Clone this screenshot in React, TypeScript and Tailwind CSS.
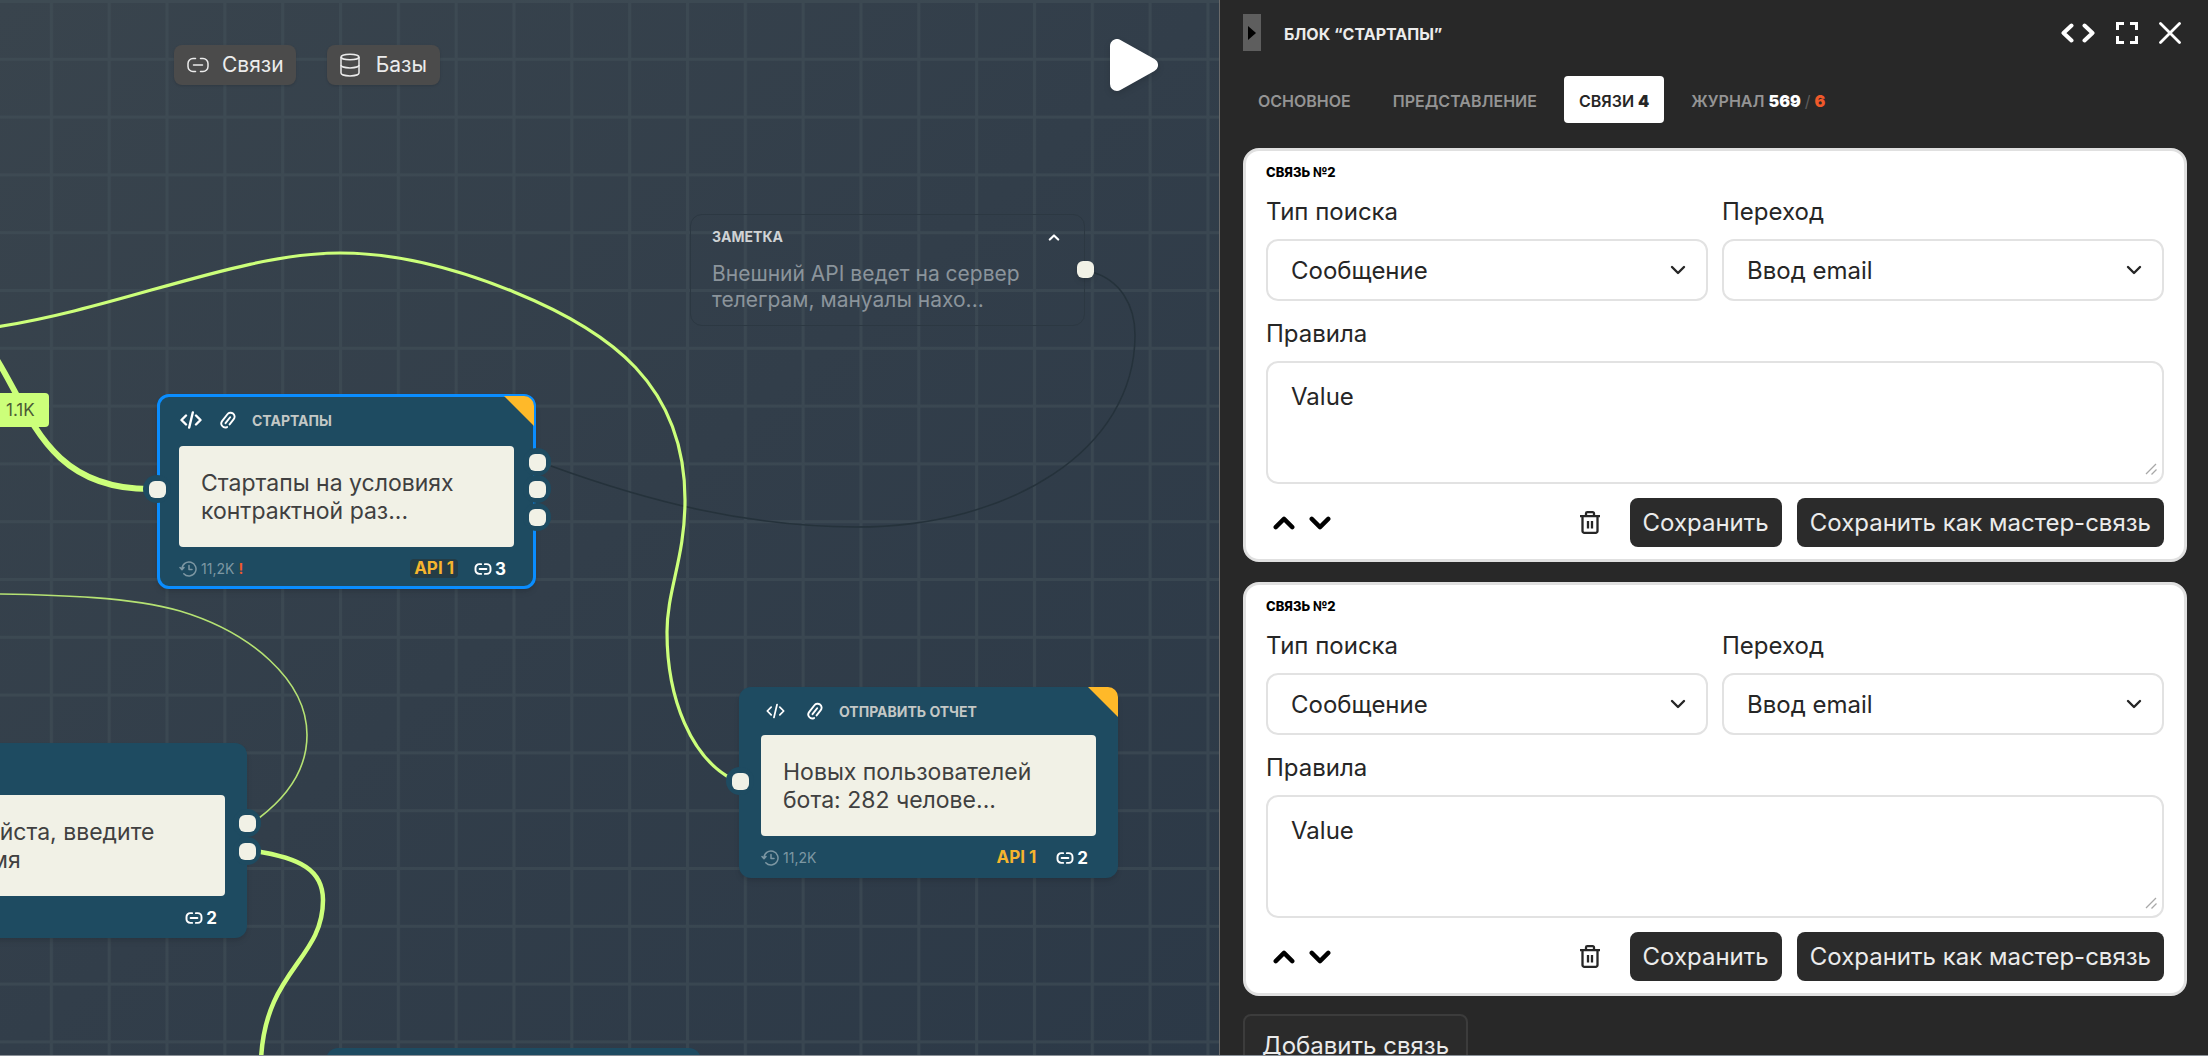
import { useState, ReactNode } from 'react';

type IconProps = { className?: string };

function LinkIcon({ className, strokeWidth = 2 }: IconProps & { strokeWidth?: number }) {
  return (
    <svg viewBox="0 0 24 16" fill="none" stroke="currentColor" strokeWidth={strokeWidth} strokeLinecap="round" className={className} aria-hidden="true">
      <path d="M9.500 1.500H7a5 5 0 0 0-5 5v3a5 5 0 0 0 5 5h2.500M14.500 1.500H17a5 5 0 0 1 5 5v3a5 5 0 0 1-5 5h-2.500M7.500 8h9" />
    </svg>
  );
}

function DatabaseIcon({ className }: IconProps) {
  return (
    <svg viewBox="0 0 20 24" fill="none" stroke="currentColor" strokeWidth="1.500" className={className} aria-hidden="true">
      <ellipse cx="10" cy="4" rx="9" ry="2.800" />
      <path d="M1 4v16c0 1.600 4 2.900 9 2.900s9-1.300 9-2.900V4" />
      <path d="M1 12c0 1.600 4 2.900 9 2.900s9-1.300 9-2.900" />
    </svg>
  );
}

function CodeIcon({ className, strokeWidth = 2.4 }: IconProps & { strokeWidth?: number }) {
  return (
    <svg viewBox="0 0 22 18" fill="none" stroke="currentColor" strokeWidth={strokeWidth} strokeLinecap="round" strokeLinejoin="round" className={className} aria-hidden="true">
      <path d="M6 4.500 1.500 9 6 13.500M16 4.500 20.500 9 16 13.500M12.800 1.500 9.200 16.500" />
    </svg>
  );
}

function ClipIcon({ className }: IconProps) {
  return (
    <svg viewBox="0 0 16 18" fill="none" stroke="currentColor" strokeWidth="1.900" strokeLinecap="round" className={className} aria-hidden="true">
      <path d="M12 11.500V4.800a4 4 0 0 0-8 0v8.700a4 4 0 0 0 7.600 1.600M8 5.500v7.500" transform="rotate(38 8 9)" />
    </svg>
  );
}

function HistoryIcon({ className }: IconProps) {
  return (
    <svg viewBox="0 0 18 16" fill="none" stroke="currentColor" strokeWidth="1.500" strokeLinecap="round" strokeLinejoin="round" className={className} aria-hidden="true">
      <path d="M3 8a7 7 0 1 1 1.800 4.700M1 6.500 3 8.700l2-2.200M10 4.500V8.500h3" />
    </svg>
  );
}

function Chevron({ className, up = false, strokeWidth = 2 }: IconProps & { up?: boolean; strokeWidth?: number }) {
  return (
    <svg viewBox="0 0 16 10" fill="none" stroke="currentColor" strokeWidth={strokeWidth} strokeLinecap="round" strokeLinejoin="round" className={className} aria-hidden="true">
      <path d={up ? 'M2 8l6-6 6 6' : 'M2 2l6 6 6-6'} />
    </svg>
  );
}

function TrashIcon({ className }: IconProps) {
  return (
    <svg viewBox="0 0 20 23" fill="none" stroke="currentColor" strokeWidth="2.300" strokeLinejoin="round" className={className} aria-hidden="true">
      <path d="M0 5.200h20M6 5V2.500a1.300 1.300 0 0 1 1.300-1.300h5.400A1.300 1.300 0 0 1 14 2.500V5M2.500 5.500V20a1.800 1.800 0 0 0 1.800 1.800h11.400a1.800 1.800 0 0 0 1.800-1.800V5.500M8 10v7.500M12 10v7.500" />
    </svg>
  );
}

function Port({ className }: IconProps) {
  return (
    <span className={`absolute flex size-7 items-center justify-center rounded-full bg-[#1e4b61] ${className}`}>
      <span className="size-[17px] rounded-md bg-[#f1f1e6]" />
    </span>
  );
}

interface FlowNodeProps {
  title?: string;
  lines: string[];
  links: number;
  views?: string;
  hasError?: boolean;
  api?: string;
  selected?: boolean;
  className: string;
  children?: ReactNode;
}

function FlowNode({ title, lines, links, views, hasError, api, selected, className, children }: FlowNodeProps) {
  return (
    <article className={`absolute w-[379px] rounded-xl bg-[#1e4b61] shadow-md ${className}`}>
      {selected && <span className="absolute inset-0 z-10 rounded-xl border-3 border-[#0a8dff]" />}
      {title && (
        <svg viewBox="0 0 30 30" className={`absolute z-10 size-[30px] ${selected ? 'top-[2px] right-[2px]' : 'top-0 right-0'}`} aria-hidden="true">
          <path d="M0 0H20a10 10 0 0 1 10 10V30Z" fill="#ffb929" />
        </svg>
      )}
      <header
        className={`flex items-center ${selected || !title ? 'h-[52px]' : 'h-12'} ${selected ? 'gap-[18px] pl-[23px]' : 'gap-[22px] pl-[27px]'}`}
      >
        {title && (
          <>
            <CodeIcon className={selected ? 'h-[18px] w-[22px] text-white' : 'h-4 w-[19px] text-white'} strokeWidth={selected ? 2.4 : 2} />
            <div className="flex items-center gap-4">
              <ClipIcon className="h-[18px] w-4 text-white" />
              <h2 className="text-[14px] font-bold text-[#c4c8c6]">{title}</h2>
            </div>
          </>
        )}
      </header>
      <div className="mx-[22px] flex h-[101px] flex-col justify-center rounded-sm bg-[#f1f1e6] pl-[22px] text-[23px] leading-7 text-[#404040]">
        {lines.map(line => (
          <p key={line} className="whitespace-nowrap">{line}</p>
        ))}
      </div>
      <footer className="flex h-[42px] items-center px-[22px] pt-px">
        {views && (
          <span className="flex items-center gap-1 text-[14px] text-[#7d97a3]">
            <HistoryIcon className="h-4 w-[18px]" />
            {views}
            {hasError && <b className="text-[#f0592a]">!</b>}
          </span>
        )}
        <span className="ml-auto flex items-center gap-4 pr-2">
          {api && (
            <span className={`rounded px-1 text-[17px] leading-[19px] font-bold text-[#f6b52e] ${selected ? 'bg-[#243c46]' : ''}`}>{api}</span>
          )}
          <span className="flex items-center gap-[3px] text-[17px] leading-5 font-bold text-white">
            <LinkIcon className="h-3 w-[18px]" strokeWidth={2.6} />
            {links}
          </span>
        </span>
      </footer>
      {children}
    </article>
  );
}

function Connections() {
  return (
    <svg className="absolute inset-0 h-full w-full" fill="none" aria-hidden="true">
      <defs>
        <pattern id="grid" x="-8" y="0" width="57.83" height="57.8" patternUnits="userSpaceOnUse">
          <path d="M0 0H57.830V3H0ZM0 3H3V57.800H0Z" fill="#435159" fillOpacity="0.5" />
        </pattern>
      </defs>
      <rect width="100%" height="100%" fill="url(#grid)" />
      <path d="M551 466C650 502 750 527 856 527C1010 527 1135 450 1135 335C1135 305 1120 280 1092 272" stroke="#25323b" strokeWidth="1.500" />
      <g stroke="#ccff7a">
        <path d="M-4 327C120 308 240 253 340 253C400 253 460 270 514 292C610 331 685 385 685 500C685 558 667 590 667 632C667 700 692 758 732 779" strokeWidth="3.200" />
        <path d="M-6 355C30 410 45 489 150 489" strokeWidth="6" />
        <path d="M0 594C60 595 130 597 180 611C250 632 307 680 307 735C307 770 288 796 259 818" strokeWidth="1.600" strokeOpacity="0.85" />
        <path d="M255 851C300 858 323 870 323 900C323 960 265 970 261 1060" strokeWidth="4.500" />
      </g>
    </svg>
  );
}

function Canvas() {
  return (
    <section className="relative overflow-hidden bg-linear-to-br from-[#39444d] via-[#323e4a] to-[#2c3947]">
      <Connections />

      <div className="relative flex items-center pt-[38px] pr-[60px] pl-[174px]">
        <button className="flex h-10 items-center gap-3 rounded-lg bg-[#4b4b4b] px-3 text-[21px] text-[#ececec] shadow-sm">
          <LinkIcon className="h-4 w-6" strokeWidth={1.5} />
          Связи
        </button>
        <button className="ml-[31px] flex h-10 items-center gap-4 rounded-lg bg-[#4b4b4b] px-[13px] text-[21px] text-[#ececec] shadow-sm">
          <DatabaseIcon className="h-6 w-5" />
          Базы
        </button>
        <button aria-label="Запустить" className="ml-auto">
          <svg viewBox="0 0 50 54" className="h-[54px] w-[50px] drop-shadow-md" aria-hidden="true">
            <path d="M8 8V46L42 27Z" fill="#fff" stroke="#fff" strokeWidth="14" strokeLinejoin="round" />
          </svg>
        </button>
      </div>

      <article className="absolute top-[214px] left-[690px] h-28 w-[395px] rounded-xl border border-[#2c3842] pt-3 pl-[21px]">
        <header className="flex items-center justify-between pr-6">
          <h2 className="text-[14px] leading-5 font-bold text-[#d0d3d5]">ЗАМЕТКА</h2>
          <button aria-label="Свернуть заметку" className="text-white">
            <Chevron up className="h-[7px] w-3" strokeWidth={3} />
          </button>
        </header>
        <p className="mt-[14px] text-[21px] leading-[26px] whitespace-nowrap text-[#8b949b]">
          Внешний API ведет на сервер
          <br />
          телеграм, мануалы нахо...
        </p>
        <span className="absolute top-[46px] -right-[10px] size-[17px] rounded-md bg-[#f1f1e6] shadow-md" />
      </article>

      <span className="absolute top-[393px] -left-3 rounded bg-[#ccff7a] py-1 pr-[14px] pl-[18px] text-[17px] leading-[26px] text-[#4c5a35]">1.1K</span>

      <FlowNode
        title="СТАРТАПЫ"
        lines={['Стартапы на условиях', 'контрактной раз...']}
        links={3}
        views="11,2K"
        hasError
        api="API 1"
        selected
        className="top-[394px] left-[157px]"
      >
        <Port className="top-[81px] -left-[14px] z-20" />
        <Port className="top-[54px] -right-[15px] z-20" />
        <Port className="top-[81px] -right-[15px] z-20" />
        <Port className="top-[109px] -right-[15px] z-20" />
      </FlowNode>

      <FlowNode lines={['Пожалуйста, введите', 'ваше имя']} links={2} className="top-[743px] -left-[132px]">
        <Port className="top-[66px] -right-[14px]" />
        <Port className="top-[94px] -right-[14px]" />
      </FlowNode>

      <FlowNode
        title="ОТПРАВИТЬ ОТЧЕТ"
        lines={['Новых пользователей', 'бота: 282 челове...']}
        links={2}
        views="11,2K"
        api="API 1"
        className="top-[687px] left-[739px]"
      >
        <Port className="top-[80px] -left-[13px]" />
      </FlowNode>

      <div className="absolute top-[1048px] left-[326px] h-48 w-[375px] rounded-xl bg-[#1e4b61]" />
    </section>
  );
}

function SelectField({ id, label, options }: { id: string; label: string; options: string[] }) {
  return (
    <div className="flex-1">
      <label htmlFor={id} className="block leading-9">{label}</label>
      <div className="relative mt-[9px]">
        <select id={id} className="h-[62px] w-full appearance-none rounded-xl border-2 border-[#e2e2e2] bg-white px-[23px] pt-px">
          {options.map(option => (
            <option key={option}>{option}</option>
          ))}
        </select>
        <Chevron className="pointer-events-none absolute top-[26px] right-[22px] h-[10px] w-4" strokeWidth={2.4} />
      </div>
    </div>
  );
}

function LinkCard({ id }: { id: string }) {
  return (
    <section className="rounded-2xl border-3 border-[#e0e0e0] bg-white px-5 pt-[11px] pb-3 text-2xl text-[#262626]">
      <h3 className="text-[13px] leading-5 font-extrabold text-black">СВЯЗЬ №2</h3>
      <div className="mt-3 flex gap-[14px]">
        <SelectField id={`${id}-type`} label="Тип поиска" options={['Сообщение', 'Команда']} />
        <SelectField id={`${id}-target`} label="Переход" options={['Ввод email', 'Отправить отчет']} />
      </div>
      <label htmlFor={`${id}-rules`} className="mt-[15px] block leading-9">Правила</label>
      <div className="relative mt-[9px]">
        <textarea
          id={`${id}-rules`}
          defaultValue="Value"
          className="block h-[123px] w-full resize-none rounded-xl border-2 border-[#e2e2e2] bg-white px-[23px] py-[18px] leading-8"
        />
        <svg viewBox="0 0 12 12" className="pointer-events-none absolute right-[7px] bottom-[9px] size-3" stroke="#a8a8a8" strokeWidth="1.300" aria-hidden="true">
          <path d="M1 11 11 1M6.500 11.500 11.500 6.500" />
        </svg>
      </div>
      <div className="mt-[14px] flex items-center">
        <button aria-label="Выше" className="ml-[7px] text-black">
          <Chevron up className="h-[14px] w-[22px]" strokeWidth={3.2} />
        </button>
        <button aria-label="Ниже" className="ml-[14px] text-black">
          <Chevron className="h-[14px] w-[22px]" strokeWidth={3.2} />
        </button>
        <button aria-label="Удалить" className="mr-[30px] ml-auto">
          <TrashIcon className="h-[23px] w-5" />
        </button>
        <button className="h-[49px] rounded-lg bg-[#2b2b2b] px-[13px] text-[#ebebeb]">Сохранить</button>
        <button className="ml-[15px] h-[49px] rounded-lg bg-[#2b2b2b] px-[13px] text-[#ebebeb]">Сохранить как мастер-связь</button>
      </div>
    </section>
  );
}

const tabs: { id: string; content: ReactNode }[] = [
  { id: 'main', content: 'ОСНОВНОЕ' },
  { id: 'view', content: 'ПРЕДСТАВЛЕНИЕ' },
  { id: 'links', content: <>СВЯЗИ <b>4</b></> },
  {
    id: 'log',
    content: (
      <>
        ЖУРНАЛ <b className="text-white">569</b> <span className="font-normal text-[#5c5c5c]">/</span> <b className="text-[#f0592a]">6</b>
      </>
    ),
  },
];

function SidePanel() {
  const [activeTab, setActiveTab] = useState('links');

  return (
    <aside className="overflow-hidden border-l border-[#6b6b6b] bg-[#282828] pt-[14px] pr-[21px] pl-[23px]">
      <header className="flex h-[37px] items-center">
        <button aria-label="Скрыть панель" className="flex h-full w-[18px] items-center justify-center bg-[#5e5e5e]">
          <svg viewBox="0 0 8 14" className="h-[14px] w-2" aria-hidden="true">
            <path d="M0 0 8 7 0 14Z" fill="#000" />
          </svg>
        </button>
        <h1 className="pt-[2px] pl-[23px] text-base font-bold text-[#ececec]">БЛОК “СТАРТАПЫ”</h1>
        <div className="ml-auto flex items-center gap-[21px] pr-[6px] text-white">
          <button aria-label="Код">
            <svg viewBox="0 0 34 20" className="h-5 w-[34px]" fill="none" stroke="currentColor" strokeWidth="4" strokeLinecap="round" strokeLinejoin="round" aria-hidden="true">
              <path d="M10.500 2.500 2.500 10l8 7.500M23.500 2.500l8 7.500-8 7.500" />
            </svg>
          </button>
          <button aria-label="На весь экран">
            <svg viewBox="0 0 22 22" className="size-[22px]" fill="none" stroke="currentColor" strokeWidth="3" aria-hidden="true">
              <path d="M8 1.500H1.500V8M14 1.500h6.500V8M8 20.500H1.500V14M14 20.500h6.500V14" />
            </svg>
          </button>
          <button aria-label="Закрыть">
            <svg viewBox="0 0 22 22" className="size-[22px]" fill="none" stroke="currentColor" strokeWidth="2.800" strokeLinecap="round" aria-hidden="true">
              <path d="M1.500 1.500 20.500 20.500M20.500 1.500 1.500 20.500" />
            </svg>
          </button>
        </div>
      </header>

      <nav className="mt-[25px] flex gap-3">
        {tabs.map(tab => (
          <button
            key={tab.id}
            onClick={() => setActiveTab(tab.id)}
            className={`h-[47px] rounded px-[15px] pt-[2px] text-base font-semibold whitespace-nowrap ${
              activeTab === tab.id ? 'bg-white text-[#262626]' : 'text-[#949494]'
            }`}
          >
            {tab.content}
          </button>
        ))}
      </nav>

      <div className="mt-[25px] flex flex-col gap-5">
        <LinkCard id="link-1" />
        <LinkCard id="link-2" />
      </div>
      <button className="mt-[18px] h-16 rounded-lg border-2 border-[#3c3c3c] bg-[#2b2b2b] px-[17px] text-2xl text-[#ebebeb]">Добавить связь</button>
    </aside>
  );
}

function App() {
  return (
    <main className="grid h-screen grid-cols-[1219fr_989fr] overflow-hidden border-b border-[#8a9097] font-['Inter',sans-serif]">
      <Canvas />
      <SidePanel />
    </main>
  );
}

export default App;
